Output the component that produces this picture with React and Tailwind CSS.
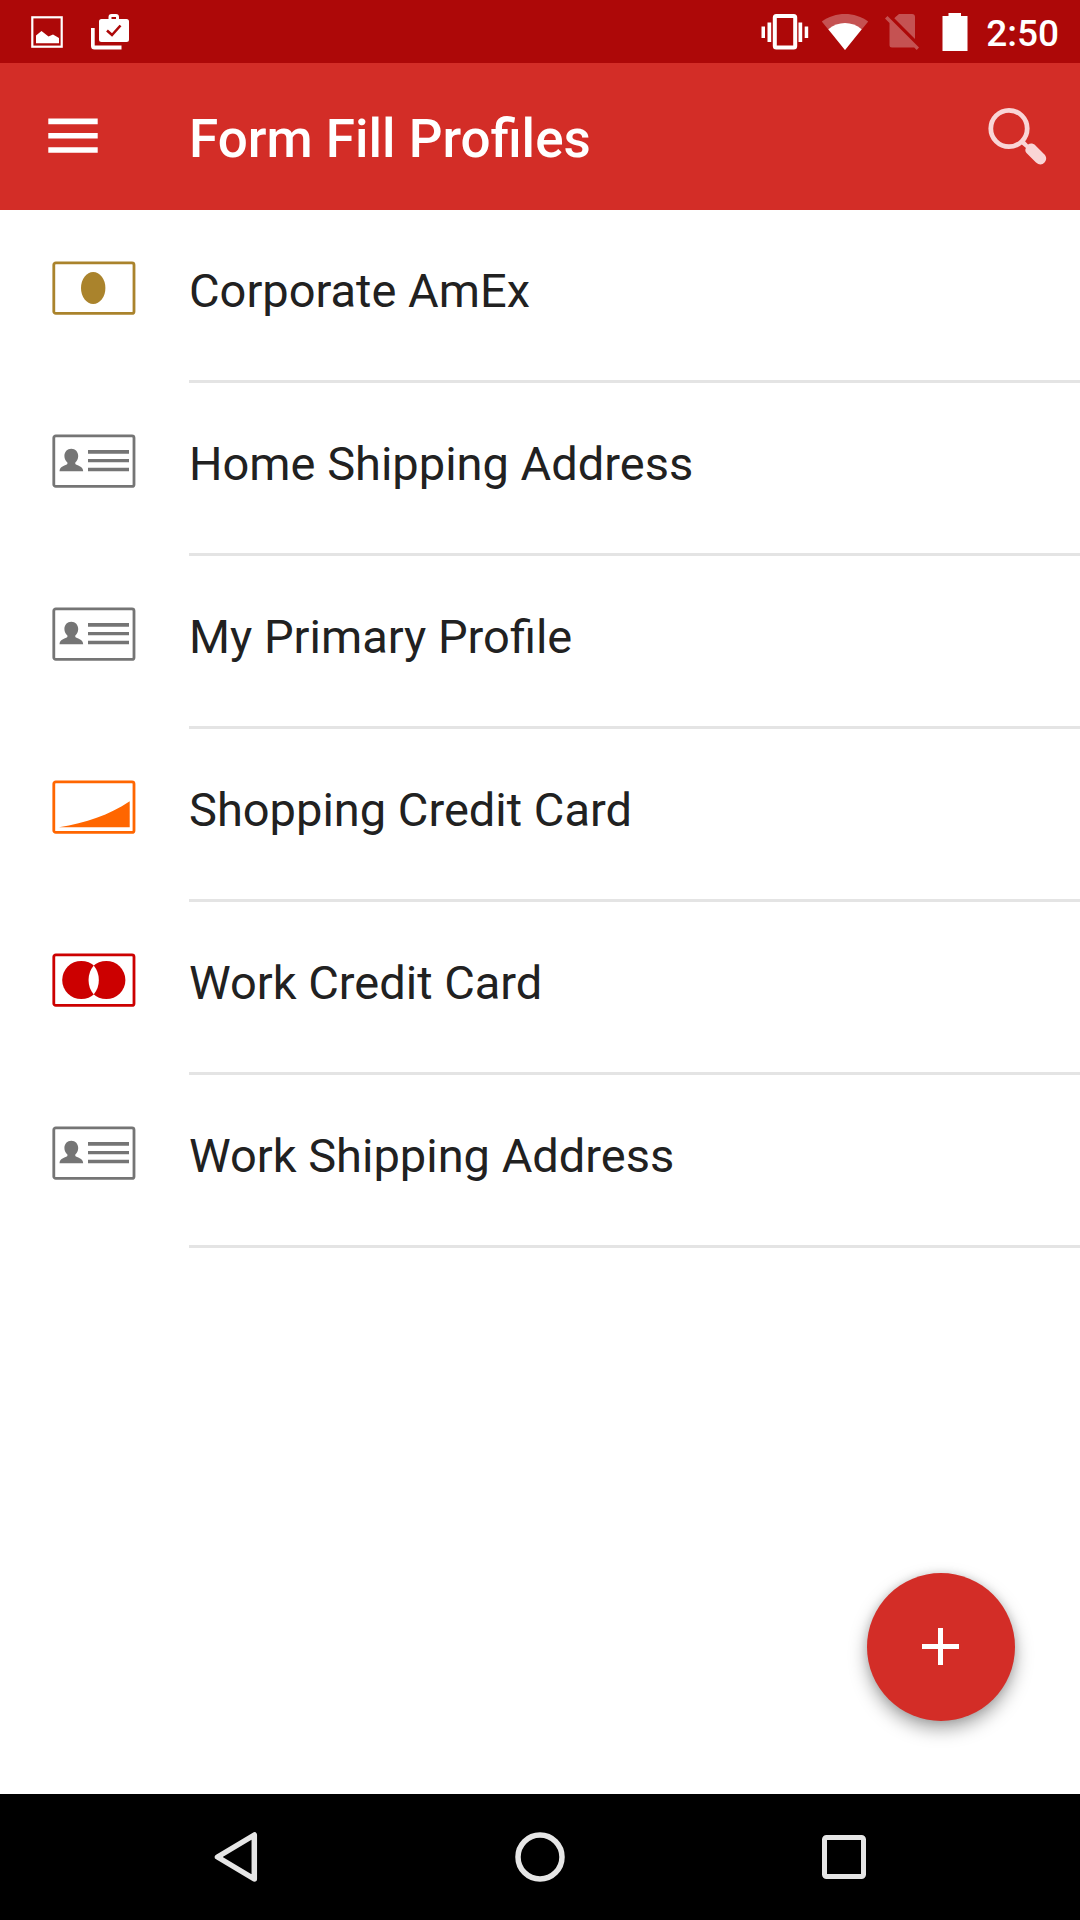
import React from 'react';

const profiles = [
  { id: 1, name: 'Corporate AmEx', type: 'amex' },
  { id: 2, name: 'Home Shipping Address', type: 'contact' },
  { id: 3, name: 'My Primary Profile', type: 'contact' },
  { id: 4, name: 'Shopping Credit Card', type: 'discover' },
  { id: 5, name: 'Work Credit Card', type: 'mastercard' },
  { id: 6, name: 'Work Shipping Address', type: 'contact' },
];

const cardColors = {
  amex: '#aa832c',
  contact: '#757575',
  discover: '#ff6600',
  mastercard: '#cc0000',
};

const CardIcon = ({ type }) => {
  const color = cardColors[type];

  return (
    <svg viewBox="0 0 84 54" className="h-[54px] w-[84px]" fill={color} aria-hidden="true">
      <rect x="1.8" y="1.8" width="80.2" height="50.6" rx="2" fill="none" stroke={color} strokeWidth="2.8" />
      {type === 'amex' && <ellipse cx="41.2" cy="27" rx="12.2" ry="16" />}
      {type === 'contact' && (
        <>
          <path d="M19.3 14.8c4.1 0 6.9 3.2 6.9 7.2 0 2.6-1.2 5-2.9 6.5v1.6c1.2 1.5 7.9 1.8 7.9 7.2H7.5c0-5.4 6.7-5.7 7.9-7.2v-1.6c-1.7-1.5-3-3.9-3-6.5 0-4 2.8-7.2 6.9-7.2z" />
          <path d="M36 16h41v3.8H36zM36 25h41v3.3H36zM36 33.8h41v3.5H36z" />
        </>
      )}
      {type === 'discover' && <path d="M7 47.3C34 42.8 57 35.3 77.7 21.3v26z" />}
      {type === 'mastercard' && (
        <>
          <circle cx="29.3" cy="27" r="19.1" />
          <circle cx="54.3" cy="27" r="19.1" />
          <path d="M41.7 12.5a23 23 0 0 1 0 29a23 23 0 0 1 0-29z" fill="#fff" />
        </>
      )}
    </svg>
  );
};

const StatusBar = () => (
  <div className="flex h-[63px] items-center justify-between bg-[#ad0808] pr-[21px] pl-[31px] text-white">
    <div className="flex items-center gap-7">
      {/* Screenshot notification */}
      <svg viewBox="0 0 32 32" className="size-8" fill="currentColor" aria-hidden="true">
        <rect x="1.3" y="1.3" width="29.4" height="29.4" fill="none" stroke="currentColor" strokeWidth="2.2" />
        <path d="M5 19.5l5.500-4.500 7 5.500 4.500-2 6 3.500v5.200H5z" />
      </svg>
      {/* Installed app notification */}
      <svg viewBox="0 0 38 36" className="h-9 w-[38px]" fill="currentColor" aria-hidden="true">
        <path
          fillRule="evenodd"
          d="M17.5 5V3a3 3 0 0 1 3-3H25a3 3 0 0 1 3 3v2h7.5A2.5 2.5 0 0 1 38 7.5v18a2.5 2.5 0 0 1-2.5 2.5h-25A2.5 2.5 0 0 1 8 25.5v-18A2.5 2.5 0 0 1 10.5 5zM20.5 3v2H25V3z"
        />
        <path d="M16 16.5l5 4.5 8.5-9.5" fill="none" stroke="#ad0808" strokeWidth="2.6" />
        <path d="M0 14h3.7v17.5h26.8v4h-27A3.5 3.5 0 0 1 0 32z" />
      </svg>
    </div>

    <div className="flex items-center">
      {/* Vibrate */}
      <svg viewBox="0 0 48 36" className="mr-3 h-9 w-12" fill="currentColor" aria-hidden="true">
        <rect x="13.8" y="2" width="20.4" height="31.5" rx="1.5" fill="none" stroke="currentColor" strokeWidth="4" />
        <path d="M.5 12.5H4V24H.5zM6.5 8.5h3.7V28H6.5zM37.5 8.5h3.7V28h-3.7zM43.7 12.5h3.5V24h-3.5z" />
      </svg>
      {/* Wifi */}
      <svg viewBox="0 0 48 36" className="mr-[15px] h-9 w-12" fill="currentColor" aria-hidden="true">
        <path d="M24 36L.8 7.5C14-2.5 34-2.5 47.2 7.5z" opacity=".3" />
        <path d="M24 36L7.3 15.3C17 7 31 7 40.7 15.3z" />
      </svg>
      {/* No sim */}
      <svg viewBox="0 0 36 36" className="mr-[22px] size-9" aria-hidden="true">
        <path
          d="M11.5 3l3.5-3h13a3 3 0 0 1 3 3v22L10.3 4.2zM1 4.5L3.5 2 35 33.5 32.7 36l-2.5-2.5H8A2.5 2.5 0 0 1 5.5 31V9z"
          fill="#fff"
          opacity=".3"
        />
      </svg>
      {/* Battery */}
      <svg viewBox="0 0 26 38" className="mr-[18px] h-[38px] w-[26px]" fill="currentColor" aria-hidden="true">
        <path d="M6.5 0H19v3h6.5v35H.5V3h6z" />
      </svg>
      <time className="pt-1 text-[37px] leading-10 font-medium">2:50</time>
    </div>
  </div>
);

const Header = () => (
  <header className="flex h-[147px] items-center bg-[#d32d27] pr-8 pl-12 text-white">
    <button type="button" aria-label="Open menu" className="mr-[91px]">
      <svg viewBox="0 0 50 38" className="h-[38px] w-[50px]" fill="currentColor" aria-hidden="true">
        <path d="M.3.5h49.4v5.7H.3zM.3 15h49.4v5.5H.3zM.3 29.2h49.4v5.6H.3z" />
      </svg>
    </button>
    <h1 className="flex-1 pt-1 text-[53px] leading-16 font-medium">Form Fill Profiles</h1>
    <button type="button" aria-label="Search" className="text-[#f9d5d6]">
      <svg viewBox="0 0 60 60" className="size-[60px]" fill="currentColor" aria-hidden="true">
        <circle cx="21" cy="21.5" r="18.2" fill="none" stroke="currentColor" strokeWidth="4.8" />
        <path d="M32 36l3.5-3.5 4.500 5c2-1.500 5-1.500 7 .5l9 9c3 3 2.700 6 .5 8.500s-5.500 2.700-8.500 0L38.500 46c-1.500-1.700-1.500-3.700-.5-5z" />
      </svg>
    </button>
  </header>
);

const ProfileRow = ({ profile }) => (
  <li>
    <button type="button" className="flex w-full items-stretch pl-[52px] text-left">
      <span className="mr-[53px] pt-[51px]">
        <CardIcon type={profile.type} />
      </span>
      <span className="flex-1 border-b-3 border-[#e4e4e4] pt-[53px] pb-[61px] text-[47px] leading-14">
        {profile.name}
      </span>
    </button>
  </li>
);

const NavBar = () => (
  <nav className="flex h-[126px] items-center bg-black px-[84px] text-[#e6e6e6]">
    <button type="button" aria-label="Back" className="flex flex-1 justify-center">
      <svg viewBox="0 0 50 50" className="size-[50px]" fill="none" stroke="currentColor" strokeWidth="5.5" strokeLinejoin="round" aria-hidden="true">
        <path d="M43.3 3v44L6.5 25z" />
      </svg>
    </button>
    <button type="button" aria-label="Home" className="flex flex-1 justify-center">
      <svg viewBox="0 0 50 50" className="size-[50px]" fill="none" stroke="currentColor" strokeWidth="5.5" aria-hidden="true">
        <circle cx="25" cy="25" r="22" />
      </svg>
    </button>
    <button type="button" aria-label="Recent apps" className="flex flex-1 justify-center">
      <svg viewBox="0 0 50 50" className="size-[50px]" fill="none" stroke="currentColor" strokeWidth="5" aria-hidden="true">
        <rect x="5.5" y="5.5" width="39" height="39" rx="2" />
      </svg>
    </button>
  </nav>
);

const App = () => {
  return (
    <div className="flex min-h-screen flex-col bg-white font-[Roboto,sans-serif] text-[#212121]">
      <StatusBar />
      <Header />

      <main className="relative flex-1">
        <ul>
          {profiles.map((profile) => (
            <ProfileRow key={profile.id} profile={profile} />
          ))}
        </ul>

        {/* Add profile */}
        <button
          type="button"
          aria-label="Add profile"
          className="absolute right-[65px] bottom-[73px] flex size-[148px] items-center justify-center rounded-full bg-[#d32d27] text-white shadow-[0_8px_18px_rgba(0,0,0,0.35),0_0_8px_rgba(0,0,0,0.12)]"
        >
          <svg viewBox="0 0 38 38" className="size-[38px]" fill="currentColor" aria-hidden="true">
            <path d="M16 0h5v16h16v5H21v16h-5V21H0v-5h16z" />
          </svg>
        </button>
      </main>

      <NavBar />
    </div>
  );
};

export default App;
